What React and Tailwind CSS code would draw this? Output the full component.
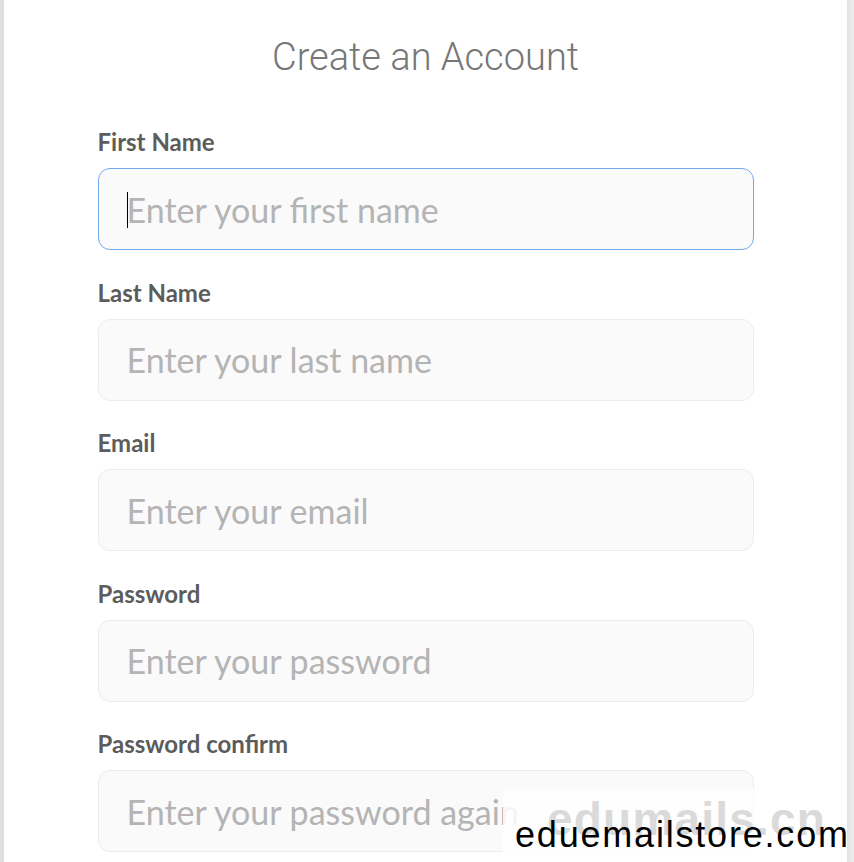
import React from 'react';

const fields = [
  { label: 'First Name', placeholder: 'Enter your first name', type: 'text', focused: true },
  { label: 'Last Name', placeholder: 'Enter your last name', type: 'text' },
  { label: 'Email', placeholder: 'Enter your email', type: 'email' },
  { label: 'Password', placeholder: 'Enter your password', type: 'password' },
  { label: 'Password confirm', placeholder: 'Enter your password again', type: 'password' },
];

const Field = ({ label, placeholder, type, focused }) => (
  <div className="mb-[28.5px]">
    <label className="block h-[28px] leading-[28px] mb-3 text-[24px] font-bold text-[#5c5c5c] font-['Lato',sans-serif]">
      {label}
    </label>
    <div className="relative">
      <input
        type={type}
        placeholder={placeholder}
        readOnly
        className={`block w-full h-[82px] rounded-[12px] border bg-[#fafafa] pl-[28px] pr-4 text-[34px] font-['Lato',sans-serif] text-[#444] placeholder:text-[#b4b4b4] outline-none ${
          focused ? 'border-[#72a9ea]' : 'border-[#ececec]'
        }`}
      />
      {focused && <span className="absolute left-[29px] top-[24px] w-px h-[36px] bg-black" />}
    </div>
  </div>
);

const App = () => {
  return (
    <div className="relative w-[854px] h-[862px] overflow-hidden bg-white flex">
      <div className="w-[4px] bg-[#dedede]" />

      <div className="flex-1">
        <div className="w-[656px] mx-auto">
          <h1 className="pt-[33px] h-[81px] leading-[48px] text-center text-[38px] font-light text-[#777] font-['Roboto',sans-serif]">
            Create an Account
          </h1>
          <form className="pt-[47px]">
            {fields.map(f => (
              <Field key={f.label} {...f} />
            ))}
          </form>
        </div>
      </div>

      <div className="w-[7px] bg-gradient-to-r from-[#e2e2e2] to-[#ececec]" />

      {/* watermark */}
      <div className="absolute left-[503px] top-[789px] w-[344px] h-[73px] bg-white/85">
        <span className="absolute left-[44px] top-[7px] leading-none whitespace-nowrap text-[46px] font-bold tracking-[1.2px] text-[#dadada] font-['Liberation_Sans',sans-serif]">
          edumails.cn
        </span>
        <span className="absolute left-[12px] top-[28px] leading-none whitespace-nowrap text-[36px] tracking-[1.8px] text-black font-['Liberation_Sans',sans-serif]">
          eduemailstore.com
        </span>
      </div>
    </div>
  );
};

export default App;
